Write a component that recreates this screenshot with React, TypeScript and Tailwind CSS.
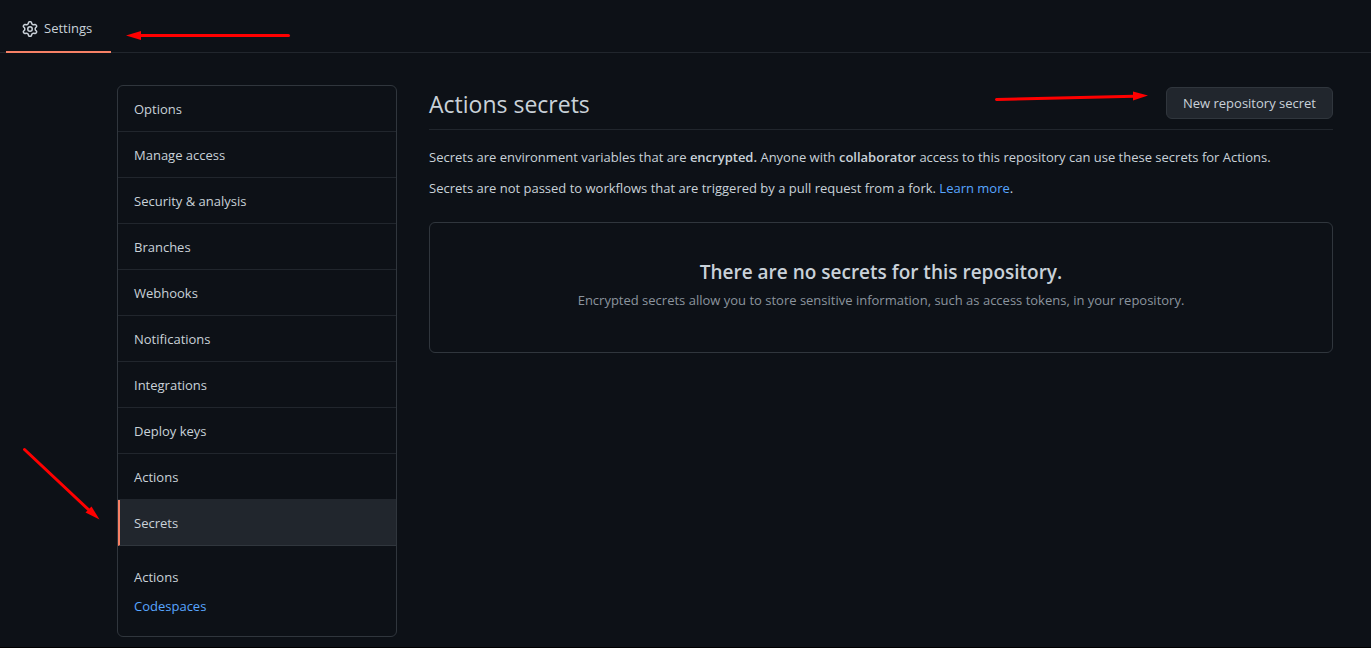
const navItems: string[] = [
  'Options',
  'Manage access',
  'Security & analysis',
  'Branches',
  'Webhooks',
  'Notifications',
  'Integrations',
  'Deploy keys',
  'Actions',
];

function GearIcon() {
  return (
    <svg viewBox="0 0 16 16" className="size-4 fill-current" aria-hidden="true">
      <path
        fillRule="evenodd"
        d="M7.429 1.525a6.593 6.593 0 011.142 0c.036.003.108.036.137.146l.289 1.105c.147.56.55.967.997 1.189.174.086.341.183.501.29.417.278.97.423 1.53.27l1.102-.303c.11-.03.175.016.195.046.219.31.41.641.573.989.014.031.022.11-.059.19l-.815.806c-.411.406-.562.957-.53 1.456a4.588 4.588 0 010 .582c-.032.499.119 1.05.53 1.456l.815.806c.08.08.073.159.059.19a6.494 6.494 0 01-.573.99c-.02.029-.086.074-.195.045l-1.103-.303c-.559-.153-1.112-.008-1.529.27-.16.107-.327.204-.5.29-.449.222-.851.628-.998 1.189l-.289 1.105c-.029.11-.101.143-.137.146a6.613 6.613 0 01-1.142 0c-.036-.003-.108-.037-.137-.146l-.289-1.105c-.147-.56-.55-.967-.997-1.189a4.502 4.502 0 01-.501-.29c-.417-.278-.97-.423-1.53-.27l-1.102.303c-.11.03-.175-.016-.195-.046a6.492 6.492 0 01-.573-.989c-.014-.031-.022-.11.059-.19l.815-.806c.411-.406.562-.957.53-1.456a4.587 4.587 0 010-.582c.032-.499-.119-1.05-.53-1.456l-.815-.806c-.08-.08-.073-.159-.059-.19a6.44 6.44 0 01.573-.99c.02-.029.086-.075.195-.045l1.103.303c.559.153 1.112.008 1.529-.27.16-.107.327-.204.5-.29.449-.222.851-.628.998-1.189l.289-1.105c.029-.11.101-.143.137-.146zM8 0c-.236 0-.47.01-.701.03-.743.065-1.29.615-1.458 1.261l-.29 1.106c-.017.066-.078.158-.211.224a5.994 5.994 0 00-.668.386c-.123.082-.233.09-.3.071L3.27 2.776c-.644-.177-1.392.02-1.82.63a7.977 7.977 0 00-.704 1.217c-.315.675-.111 1.422.363 1.891l.815.806c.05.048.098.147.088.294a6.084 6.084 0 000 .772c.01.147-.038.246-.088.294l-.815.806c-.474.469-.678 1.216-.363 1.891.2.428.436.835.704 1.218.428.609 1.176.806 1.82.63l1.103-.303c.066-.019.176-.011.299.071.213.143.436.272.668.386.133.066.194.158.212.224l.289 1.106c.169.646.715 1.196 1.458 1.26a8.094 8.094 0 001.402 0c.743-.064 1.29-.614 1.458-1.26l.29-1.106c.017-.066.078-.158.211-.224a5.98 5.98 0 00.668-.386c.123-.082.233-.09.3-.071l1.102.302c.644.177 1.392-.02 1.82-.63.268-.382.505-.789.704-1.217.315-.675.111-1.422-.364-1.891l-.814-.806c-.05-.048-.098-.147-.088-.294a6.1 6.1 0 000-.772c-.01-.147.039-.246.088-.294l.814-.806c.475-.469.679-1.216.364-1.891a7.992 7.992 0 00-.704-1.218c-.428-.609-1.176-.806-1.82-.63l-1.103.303c-.066.019-.176.011-.299-.071a5.991 5.991 0 00-.668-.386c-.133-.066-.194-.158-.212-.224L10.16 1.29C9.99.645 9.444.095 8.701.031A8.094 8.094 0 008 0zm1.5 8a1.5 1.5 0 11-3 0 1.5 1.5 0 013 0zM11 8a3 3 0 11-6 0 3 3 0 016 0z"
      />
    </svg>
  );
}

function Annotations() {
  return (
    <svg
      className="pointer-events-none absolute top-0 left-0 h-[648px] w-[1371px]"
      viewBox="0 0 1371 648"
      fill="#ff0000"
      stroke="#ff0000"
      aria-hidden="true"
    >
      <g strokeWidth="3" strokeLinecap="round">
        <path d="M140 35.5H288.5" />
        <path d="M996.5 99.5L1134 96.3" />
        <path d="M24.5 449.5L90 511" />
      </g>
      <g stroke="none">
        <path d="M126 35.5L141 31V40Z" />
        <path d="M1148 95.5L1133 91.5V100.5Z" />
        <path d="M99.5 519.5L91.5 506.5L85.5 512.5Z" />
      </g>
    </svg>
  );
}

export default function App() {
  return (
    <div className="relative min-h-screen overflow-hidden border-b border-black bg-[#0d1117] font-['Open_Sans','Noto_Sans',sans-serif] text-[13px] leading-[21px] text-[#c9d1d9]">
      <header className="flex border-b border-[#21262d] px-1.5">
        <a
          href="#settings"
          className="-mb-px flex h-[53px] min-w-[105px] items-center gap-1.5 border-b-2 border-[#f78166] px-4 pt-1.5"
        >
          <GearIcon />
          Settings
        </a>
      </header>

      <div className="flex items-start gap-8 pt-8 pr-[38px] pl-[117px]">
        <nav
          aria-label="Repository settings"
          className="w-[280px] shrink-0 overflow-hidden rounded-md border border-[#30363d]"
        >
          {navItems.map((item) => (
            <a
              key={item}
              href="#"
              className="block border-b border-[#21262d] px-4 pt-[13px] pb-[11px]"
            >
              {item}
            </a>
          ))}
          <a
            href="#"
            aria-current="page"
            className="block border-b border-l-2 border-b-[#30363d] border-l-[#f78166] bg-[#21262d] pt-[13px] pr-4 pb-[11px] pl-3.5"
          >
            Secrets
          </a>
          <div className="px-4 pt-[17px] pb-[15px]">
            <a href="#" className="block py-1">
              Actions
            </a>
            <a href="#" className="block py-1 text-[#58a6ff]">
              Codespaces
            </a>
          </div>
        </nav>

        <main className="min-w-0 flex-1">
          <div className="flex items-center justify-between border-b border-[#21262d] pb-2">
            <h1 className="pt-0.5 text-[23px] leading-[34px]">
              Actions secrets
            </h1>
            <button
              type="button"
              className="h-8 rounded-md border border-[#30363d] bg-[#21262d] px-4"
            >
              New repository secret
            </button>
          </div>
          <p className="mt-[17px]">
            Secrets are environment variables that are{' '}
            <strong className="font-semibold">encrypted.</strong> Anyone with{' '}
            <strong className="font-semibold">collaborator</strong> access to
            this repository can use these secrets for Actions.
          </p>
          <p className="mt-2.5">
            Secrets are not passed to workflows that are triggered by a pull
            request from a fork.{' '}
            <a href="#" className="text-[#58a6ff]">
              Learn more
            </a>
            .
          </p>
          <section className="mt-[23px] rounded-md border border-[#30363d] px-8 pt-[34px] pb-[41px] text-center">
            <h2 className="text-[19px] leading-[30px] font-semibold">
              There are no secrets for this repository.
            </h2>
            <p className="mt-[3px] text-[#8b949e]">
              Encrypted secrets allow you to store sensitive information, such
              as access tokens, in your repository.
            </p>
          </section>
        </main>
      </div>
      <Annotations />
    </div>
  );
}
